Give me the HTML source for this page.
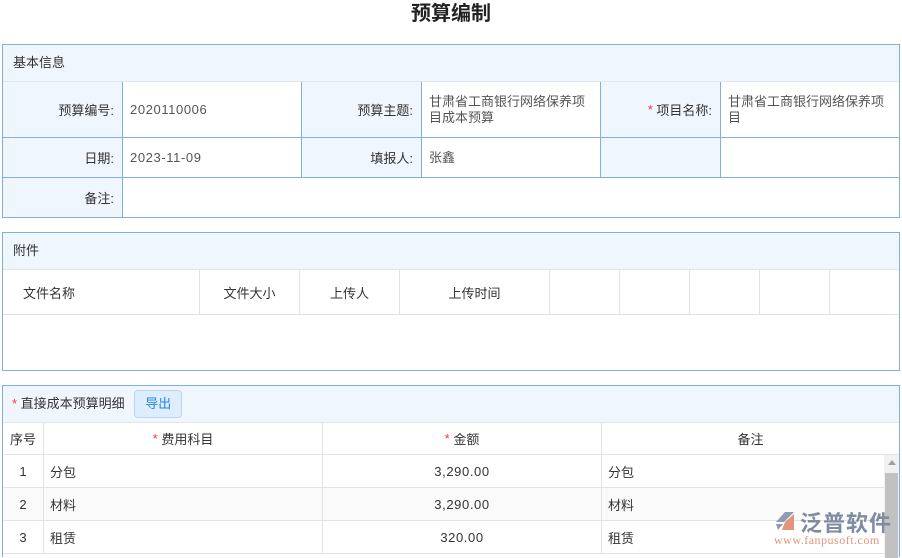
<!DOCTYPE html>
<html><head><meta charset="utf-8"><style>
*{margin:0;padding:0;box-sizing:border-box}
body{width:902px;height:555px;overflow:hidden;background:#fff;font-family:"Liberation Sans","Noto Sans CJK SC",sans-serif;font-size:13px;color:#333;position:relative}
.a{position:absolute}
.t{left:0;width:902px;top:0;text-align:center;font-size:20px;font-weight:bold;color:#222;line-height:28px}
.p{border:1px solid #7fb0e0;left:2px;width:898px}
.h{background:#f0f6fe;left:0;width:100%;height:37px;line-height:36px;padding-left:10px;border-bottom:1px solid #dfe6ee}
.c{position:absolute;display:flex;align-items:center}
.lb{background:#f0f6fe;justify-content:flex-end;padding-right:8px;border-right:1px solid #7fb0e0;border-bottom:1px solid #7fb0e0}
.vl{padding-left:7px;padding-right:14px;border-right:1px solid #7fb0e0;border-bottom:1px solid #7fb0e0;color:#555;line-height:16px}
.n{letter-spacing:0.6px}
.g{position:absolute;border-right:1px solid #e3e3e3;border-bottom:1px solid #e3e3e3;display:flex;align-items:center;justify-content:center;color:#333}
.r{color:#f33}
</style></head><body>
<div class="a t">预算编制</div>

<div class="a p" style="top:44px;height:174px">
<div class="a h" style="top:0">基本信息</div>
<div class="c lb" style="left:0;top:37px;width:120px;height:56px">预算编号:</div>
<div class="c vl n" style="left:120px;top:37px;width:179px;height:56px">2020110006</div>
<div class="c lb" style="left:299px;top:37px;width:120px;height:56px">预算主题:</div>
<div class="c vl" style="left:419px;top:37px;width:179px;height:56px">甘肃省工商银行网络保养项目成本预算</div>
<div class="c lb" style="left:598px;top:37px;width:120px;height:56px"><span class="r">*</span>&nbsp;项目名称:</div>
<div class="c vl" style="left:718px;top:37px;width:178px;height:56px;border-right:none">甘肃省工商银行网络保养项目</div>
<div class="c lb" style="left:0;top:93px;width:120px;height:40px">日期:</div>
<div class="c vl n" style="left:120px;top:93px;width:179px;height:40px">2023-11-09</div>
<div class="c lb" style="left:299px;top:93px;width:120px;height:40px">填报人:</div>
<div class="c vl" style="left:419px;top:93px;width:179px;height:40px">张鑫</div>
<div class="c lb" style="left:598px;top:93px;width:120px;height:40px"></div>
<div class="c vl" style="left:718px;top:93px;width:178px;height:40px;border-right:none"></div>
<div class="c lb" style="left:0;top:133px;width:120px;height:39px;border-bottom:none">备注:</div>
</div>

<div class="a p" style="top:232px;height:139px">
<div class="a h" style="top:0">附件</div>
<div class="g" style="left:0;top:37px;width:197px;height:45px;justify-content:flex-start;padding-left:20px">文件名称</div>
<div class="g" style="left:197px;top:37px;width:100px;height:45px">文件大小</div>
<div class="g" style="left:297px;top:37px;width:100px;height:45px">上传人</div>
<div class="g" style="left:397px;top:37px;width:150px;height:45px">上传时间</div>
<div class="g" style="left:547px;top:37px;width:70px;height:45px"></div>
<div class="g" style="left:617px;top:37px;width:70px;height:45px"></div>
<div class="g" style="left:687px;top:37px;width:70px;height:45px"></div>
<div class="g" style="left:757px;top:37px;width:70px;height:45px"></div>
<div class="g" style="left:827px;top:37px;width:69px;height:45px;border-right:none"></div>
</div>

<div class="a p" style="top:385px;height:172px;border-bottom:none">
<div class="a h" style="top:0;padding-left:9px"><span class="r">*</span> 直接成本预算明细
<span style="display:inline-block;margin-left:6px;height:28px;line-height:26px;padding:0 10px;border:1px solid #b9d5f0;background:#deedfb;color:#1e88e5;border-radius:4px;vertical-align:middle;position:relative;top:-1px">导出</span></div>
<div class="g" style="left:0;top:37px;width:41px;height:32px">序号</div>
<div class="g" style="left:41px;top:37px;width:279px;height:32px"><span class="r">*</span>&nbsp;费用科目</div>
<div class="g" style="left:320px;top:37px;width:279px;height:32px"><span class="r">*</span>&nbsp;金额</div>
<div class="g" style="left:599px;top:37px;width:297px;height:32px;border-right:none">备注</div>

<div class="g" style="left:0;top:69px;width:41px;height:33px">1</div>
<div class="g" style="left:41px;top:69px;width:279px;height:33px;justify-content:flex-start;padding-left:6px">分包</div>
<div class="g n" style="left:320px;top:69px;width:279px;height:33px">3,290.00</div>
<div class="g" style="left:599px;top:69px;width:282px;height:33px;justify-content:flex-start;padding-left:6px;border-right:none">分包</div>

<div class="g" style="left:0;top:102px;width:41px;height:33px;background:#fafafa">2</div>
<div class="g" style="left:41px;top:102px;width:279px;height:33px;justify-content:flex-start;padding-left:6px;background:#fafafa">材料</div>
<div class="g n" style="left:320px;top:102px;width:279px;height:33px;background:#fafafa">3,290.00</div>
<div class="g" style="left:599px;top:102px;width:282px;height:33px;justify-content:flex-start;padding-left:6px;border-right:none;background:#fafafa">材料</div>

<div class="g" style="left:0;top:135px;width:41px;height:33px">3</div>
<div class="g" style="left:41px;top:135px;width:279px;height:33px;justify-content:flex-start;padding-left:6px">租赁</div>
<div class="g n" style="left:320px;top:135px;width:279px;height:33px">320.00</div>
<div class="g" style="left:599px;top:135px;width:282px;height:33px;justify-content:flex-start;padding-left:6px;border-right:none">租赁</div>

<div class="a" style="left:881px;top:69px;width:15px;height:103px;background:#f1f1f1"></div>
<div class="a" style="left:885px;top:74px;width:0;height:0;border-left:4px solid transparent;border-right:4px solid transparent;border-bottom:5px solid #a0a0a0"></div>
<div class="a" style="left:882px;top:87px;width:13px;height:85px;background:#c1c1c1"></div>
</div>

<div class="a" style="left:772px;top:508px;width:26px;height:26px">
<svg width="26" height="26" viewBox="0 0 26 26"><path d="M4 14 L13 4 L22 4 L12 14 Z" fill="#8e9bb4"/><path d="M13 14 L22 6 L22 22 L10 22 Z" fill="#e2957a"/><path d="M4 16 L11 16 L6 22 Z" fill="#8e9bb4"/></svg>
</div>
<div class="a" style="left:800px;top:506px;font-size:22px;font-weight:bold;color:#7f8aa3;letter-spacing:1px">泛普软件</div>
<div class="a" style="left:774px;top:533px;font-size:12px;font-family:'Liberation Serif',serif;color:#e2957a;letter-spacing:0.5px">www.fanpusoft.com</div>
</body></html>
